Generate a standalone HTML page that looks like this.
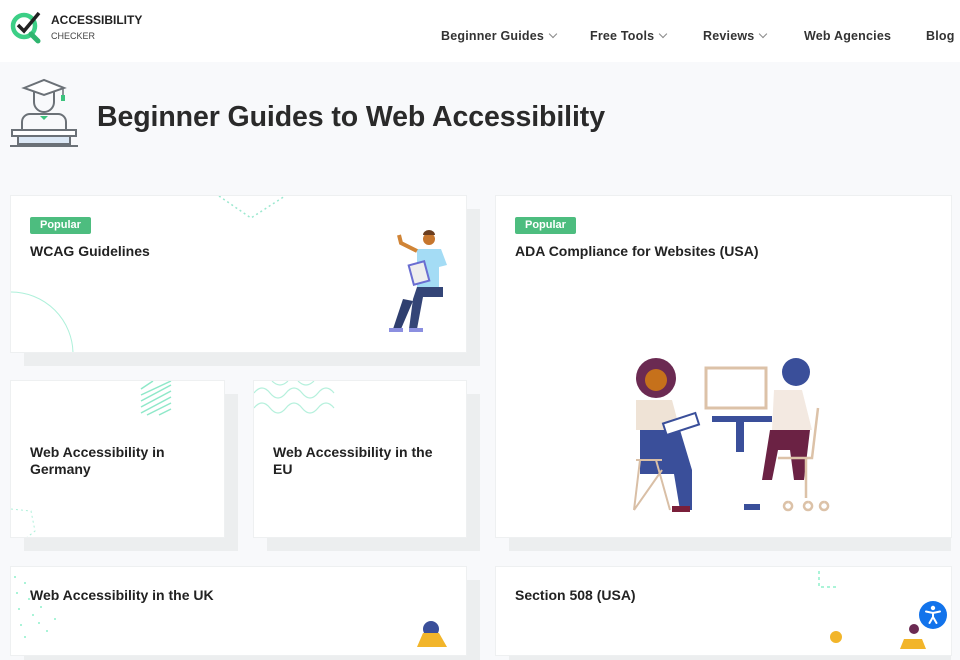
<!DOCTYPE html>
<html><head><meta charset="utf-8"><style>
*{margin:0;padding:0;box-sizing:border-box}
body{width:960px;height:640px;overflow:hidden;background:#f8f9fb;font-family:"Liberation Sans",Arial,sans-serif;color:#222;position:relative}
.hdr{position:absolute;left:0;top:0;width:960px;height:62px;background:#fff}
.nav{position:absolute;top:29px;font-size:12.5px;font-weight:bold;color:#333;letter-spacing:.2px}
.nav span.c{display:inline-block;width:6px;height:6px;border-right:1px solid #888;border-bottom:1px solid #888;transform:rotate(45deg);margin-left:6px;position:relative;top:-3px}
.sh{position:absolute;background:#eceeef}
.card{position:absolute;background:#fff;border:1px solid #eef0f1;overflow:hidden}
.card h3{position:absolute;left:19px;font-size:14px;font-weight:bold;color:#222;line-height:17px}
.pop{position:absolute;left:19px;top:21px;background:#4dbd7f;color:#fff;font-size:11px;font-weight:bold;padding:2px 10px;border-radius:2px;height:17px}
</style></head><body>
<div class="hdr">
<svg style="position:absolute;left:9px;top:9px" width="36" height="36" viewBox="0 0 36 36">
<circle cx="15" cy="17" r="11" fill="none" stroke="#3ccf86" stroke-width="4.5"/>
<line x1="22" y1="25" x2="29" y2="32" stroke="#2fb56f" stroke-width="5" stroke-linecap="round"/>
<path d="M9 16 L15 22 L30 4" fill="none" stroke="#222" stroke-width="3.5"/>
</svg>
<div style="position:absolute;left:51px;top:13px;font-size:12px;font-weight:bold;color:#222">ACCESSIBILITY</div>
<div style="position:absolute;left:51px;top:31px;font-size:9px;color:#444">CHECKER</div>
<div class="nav" style="left:441px">Beginner Guides<span class="c"></span></div>
<div class="nav" style="left:590px">Free Tools<span class="c"></span></div>
<div class="nav" style="left:703px">Reviews<span class="c"></span></div>
<div class="nav" style="left:804px">Web Agencies</div>
<div class="nav" style="left:926px">Blog</div>
</div>
<svg style="position:absolute;left:10px;top:78px" width="70" height="72" viewBox="0 0 70 72">
<path d="M14 10 L34 2 L54 10 L34 17 Z" fill="#fff" stroke="#6b7177" stroke-width="2"/>
<line x1="53" y1="10" x2="53" y2="19" stroke="#6b7177" stroke-width="1.5"/>
<rect x="51" y="17" width="4" height="6" fill="#3cc37d"/>
<path d="M24 14 V24 a10 10 0 0 0 20 0 V14" fill="none" stroke="#6b7177" stroke-width="2"/>
<path d="M12 52 V44 a8 8 0 0 1 8 -8 H48 a8 8 0 0 1 8 8 V52" fill="none" stroke="#6b7177" stroke-width="2"/>
<path d="M30 38 L34 42 L38 38" fill="#3cc37d"/>
<rect x="2" y="52" width="64" height="6" fill="#fff" stroke="#6b7177" stroke-width="2"/>
<rect x="8" y="58" width="52" height="8" fill="#dce8f5" stroke="#6b7177" stroke-width="2"/>
<line x1="0" y1="68" x2="68" y2="68" stroke="#6b7177" stroke-width="2"/>
</svg>
<div style="position:absolute;left:97px;top:101px;font-size:28.5px;font-weight:bold;color:#2a2a2a;letter-spacing:-0.1px">Beginner Guides to Web Accessibility</div>

<div class="sh" style="left:24px;top:209px;width:456px;height:157px"></div>
<div class="card" style="left:10px;top:195px;width:457px;height:158px">
<svg style="position:absolute;left:0;top:0" width="457" height="158"><path d="M208 0 L240 22 L274 0" fill="none" stroke="#9be8cf" stroke-width="1.5" stroke-dasharray="2 3"/><circle cx="0" cy="158" r="62" fill="none" stroke="#aef0da" stroke-width="1"/>
<g transform="translate(368,35)"><circle cx="50" cy="8" r="6" fill="#c6762e"/><path d="M44 4 a6 5 0 0 1 12 0 z" fill="#6b3e1f"/><path d="M38 18 h24 l6 16 -8 2 v20 h-22 z" fill="#a4dcf5"/><path d="M38 20 L22 12 L20 4" stroke="#d08436" stroke-width="4" fill="none"/><rect x="32" y="32" width="16" height="20" fill="#eee" stroke="#6a6ed1" stroke-width="2" transform="rotate(-15 40 42)"/><path d="M38 56 h26 v10 h-20 l-6 32 h-8 l4 -30 z" fill="#344577"/><path d="M24 68 L14 98 h8 l12 -28" fill="#2f3f6f"/><rect x="10" y="97" width="14" height="4" fill="#8b8fe0"/><rect x="30" y="97" width="14" height="4" fill="#8b8fe0"/></g></svg>
<div class="pop">Popular</div><h3 style="top:47px">WCAG Guidelines</h3></div>

<div class="sh" style="left:24px;top:394px;width:214px;height:157px"></div>
<div class="card" style="left:10px;top:380px;width:215px;height:158px">
<svg style="position:absolute;left:0;top:0" width="215" height="158"><g stroke="#8fe8c9" stroke-width="1.5"><line x1="130" y1="8" x2="142" y2="0"/><line x1="130" y1="14" x2="160" y2="0"/><line x1="130" y1="20" x2="160" y2="4"/><line x1="130" y1="26" x2="160" y2="10"/><line x1="130" y1="32" x2="160" y2="16"/><line x1="136" y1="34" x2="160" y2="22"/><line x1="148" y1="34" x2="160" y2="28"/></g><path d="M0 128 L20 130 L24 150 L14 158" fill="none" stroke="#aef0da" stroke-dasharray="2 3"/></svg>
<h3 style="top:63px">Web Accessibility in<br>Germany</h3></div>

<div class="sh" style="left:267px;top:394px;width:213px;height:157px"></div>
<div class="card" style="left:253px;top:380px;width:214px;height:158px">
<svg style="position:absolute;left:0;top:0" width="214" height="158"><g fill="none" stroke="#b5f0dc" stroke-width="1.2"><path d="M0 12 q8 -10 16 0 t16 0 t16 0 t16 0 t16 0"/><path d="M0 27 q8 -10 16 0 t16 0 t16 0 t16 0 t16 0"/><path d="M18 0 q8 8 16 0 M44 0 q8 8 16 0"/></g></svg>
<h3 style="top:63px">Web Accessibility in the<br>EU</h3></div>

<div class="sh" style="left:509px;top:209px;width:442px;height:342px"></div>
<div class="card" style="left:495px;top:195px;width:457px;height:343px">
<svg style="position:absolute;left:0;top:0" width="457" height="343"><g transform="translate(130,160)">
<circle cx="30" cy="22" r="20" fill="#6b2a52"/><circle cx="30" cy="24" r="11" fill="#c6711b"/>
<path d="M10 44 h36 l8 30 h-44 z" fill="#efe3d6"/><path d="M14 74 h40 l12 40 v40 h-12 l-6 -36 h-34 z" fill="#3a4f9a"/>
<rect x="38" y="62" width="34" height="12" fill="#fff" stroke="#3a4f9a" stroke-width="2" transform="rotate(-18 55 68)"/>
<path d="M10 104 h26 M14 104 l-6 50 M30 104 l14 50 M8 154 l28 -40" stroke="#d9bfa6" stroke-width="2" fill="none"/>
<rect x="46" y="150" width="18" height="6" fill="#7a1f3a"/>
<rect x="80" y="12" width="60" height="40" fill="#fff" stroke="#dcc2a8" stroke-width="3"/>
<rect x="86" y="60" width="60" height="6" fill="#3a4f9a"/><rect x="110" y="66" width="8" height="30" fill="#3a4f9a"/>
<circle cx="170" cy="16" r="14" fill="#3a4f9a"/><path d="M148 34 h28 l10 40 h-40 z" fill="#f3e9e1"/>
<path d="M144 74 h40 l-6 50 h-10 l-4 -30 h-12 l-6 30 h-10 z" fill="#6b2244"/>
<path d="M192 52 l-6 50 h-34 M180 102 v40 M162 146 a4 4 0 1 0 0.1 0 M182 146 a4 4 0 1 0 0.1 0 M198 146 a4 4 0 1 0 0.1 0" stroke="#dcc2a8" stroke-width="2.5" fill="none"/>
<rect x="118" y="148" width="16" height="6" fill="#3a4f9a"/></g></svg>
<div class="pop">Popular</div><h3 style="top:47px">ADA Compliance for Websites (USA)</h3></div>

<div class="sh" style="left:24px;top:580px;width:456px;height:80px"></div>
<div class="card" style="left:10px;top:566px;width:457px;height:90px">
<svg style="position:absolute;left:0;top:0" width="457" height="90"><g fill="#8ff0cc"><circle cx="4" cy="10" r="1"/><circle cx="14" cy="16" r="1"/><circle cx="6" cy="26" r="1"/><circle cx="18" cy="32" r="1"/><circle cx="8" cy="42" r="1"/><circle cx="22" cy="48" r="1"/><circle cx="10" cy="58" r="1"/><circle cx="28" cy="56" r="1"/><circle cx="14" cy="70" r="1"/><circle cx="36" cy="64" r="1"/><circle cx="44" cy="52" r="1"/><circle cx="30" cy="40" r="1"/></g><circle cx="420" cy="62" r="8" fill="#3a4f9a"/><path d="M412 66 h16 l8 14 h-30 z" fill="#f2b52a"/></svg>
<h3 style="top:20px">Web Accessibility in the UK</h3></div>

<div class="sh" style="left:509px;top:580px;width:442px;height:80px"></div>
<div class="card" style="left:495px;top:566px;width:457px;height:90px">
<svg style="position:absolute;left:0;top:0" width="457" height="90"><path d="M323 4 V20 H340" fill="none" stroke="#8ff0cc" stroke-dasharray="3 3" stroke-width="1.5"/><circle cx="340" cy="70" r="6" fill="#f2b52a"/><circle cx="418" cy="62" r="5" fill="#6b2a52"/><path d="M408 72 h18 l4 10 h-26 z" fill="#f2b52a"/></svg>
<h3 style="top:20px">Section 508 (USA)</h3></div>

<svg style="position:absolute;left:919px;top:601px" width="28" height="28" viewBox="0 0 28 28"><circle cx="14" cy="14" r="14" fill="#1273eb"/><circle cx="14" cy="7" r="2.2" fill="#fff"/><path d="M7 10.5 L14 12 L21 10.5 M14 12 V16 L10.5 22 M14 16 L17.5 22" stroke="#fff" stroke-width="2" fill="none" stroke-linecap="round"/></svg>
</body></html>
